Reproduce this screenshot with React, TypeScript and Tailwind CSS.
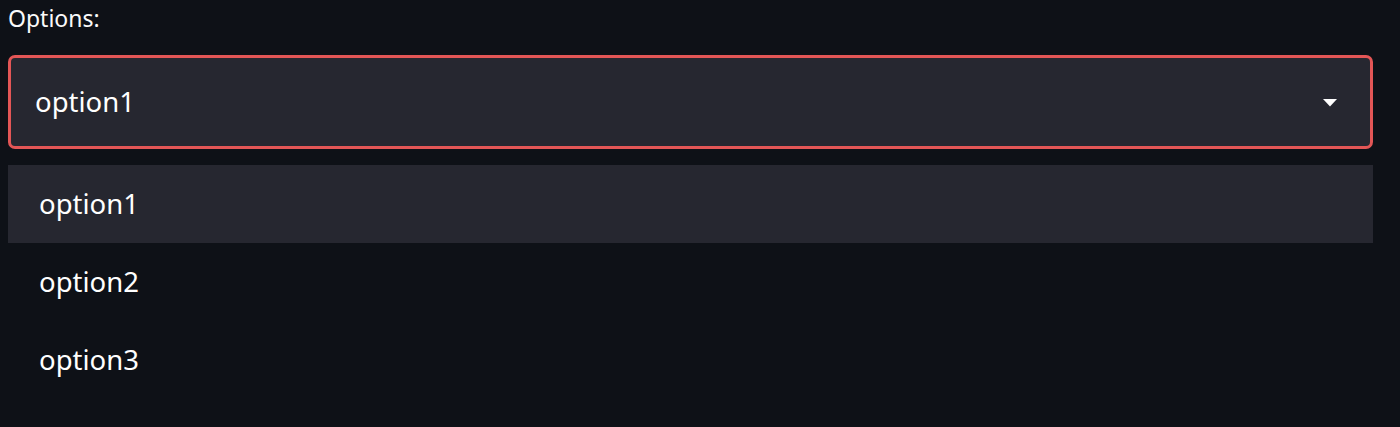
import { useState } from 'react'

const options = ['option1', 'option2', 'option3']

export default function App() {
  const [value, setValue] = useState('option1')
  const [hovered, setHovered] = useState('option1')

  return (
    <div className="h-[427px] w-[1400px] overflow-hidden bg-[#0e1117] pl-2 pr-[27px] font-['Noto_Sans',sans-serif] text-[#fafafa]">
      <p className="pt-[1px] text-[23px] leading-[34px]">Options:</p>

      <div className="mt-[20px] flex h-[94px] items-center justify-between rounded-[7px] border-[3px] border-[#e35656] bg-[#262730] pl-[24px] pr-[33px]">
        <span className="text-[27.5px] leading-none text-white">{value}</span>
        <svg width="14" height="8" viewBox="0 0 14 8" className="mt-[2px]">
          <path d="M0 0 L14 0 L7 7.5 Z" fill="#ffffff" />
        </svg>
      </div>

      <ul className="mt-[16px] flex flex-col">
        {options.map((opt) => (
          <li
            key={opt}
            onMouseEnter={() => setHovered(opt)}
            onClick={() => setValue(opt)}
            className={
              'flex h-[78px] cursor-pointer items-center pl-[31px] text-[27.5px] text-white ' +
              (hovered === opt ? 'bg-[#262730]' : 'bg-transparent')
            }
          >
            {opt}
          </li>
        ))}
      </ul>
    </div>
  )
}
